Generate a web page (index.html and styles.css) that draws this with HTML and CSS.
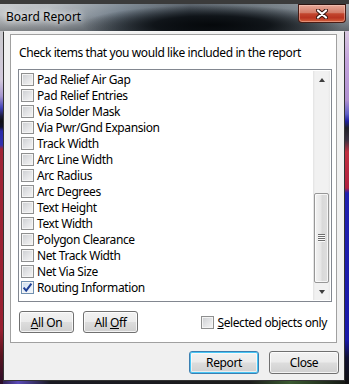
FILE: index.html
```html
<!DOCTYPE html>
<html lang="en">
<head>
  <meta charset="UTF-8">
  <title>Board Report</title>
  <link rel="stylesheet" href="styles.css">
</head>
<body>

  <div class="window">
    <div class="titlebar">
      <span class="title">Board Report</span>
      <button class="close-btn" title="Close">
        <svg width="12" height="10" viewBox="0 0 12 10">
          <path d="M2 1.5 L10 8.5 M10 1.5 L2 8.5" stroke="#3b1812" stroke-width="4.2" stroke-linecap="round"/>
          <path d="M2 1.5 L10 8.5 M10 1.5 L2 8.5" stroke="#ffffff" stroke-width="2.2" stroke-linecap="round"/>
        </svg>
      </button>
    </div>

    <div class="client">
      <div class="panel">
        <div class="heading">Check items that you would like included in the report</div>

        <div class="listbox">
          <ul class="items">
            <li><span class="cb"></span>Pad Relief Air Gap</li>
            <li><span class="cb"></span>Pad Relief Entries</li>
            <li><span class="cb"></span>Via Solder Mask</li>
            <li><span class="cb"></span>Via Pwr/Gnd Expansion</li>
            <li><span class="cb"></span>Track Width</li>
            <li><span class="cb"></span>Arc Line Width</li>
            <li><span class="cb"></span>Arc Radius</li>
            <li><span class="cb"></span>Arc Degrees</li>
            <li><span class="cb"></span>Text Height</li>
            <li><span class="cb"></span>Text Width</li>
            <li><span class="cb"></span>Polygon Clearance</li>
            <li><span class="cb"></span>Net Track Width</li>
            <li><span class="cb"></span>Net Via Size</li>
            <li>
              <span class="cb checked">
                <svg width="11" height="11" viewBox="0 0 11 11">
                  <path d="M1.6 5.6 L4.2 8.6 L9.4 1.6" fill="none" stroke="#1f3f96" stroke-width="2"/>
                </svg>
              </span>Routing Information
            </li>
          </ul>

          <!-- scrollbar -->
          <div class="scrollbar">
            <div class="sb-btn"><span class="arrow up"></span></div>
            <div class="sb-track">
              <div class="sb-thumb"><span class="grip"></span></div>
            </div>
            <div class="sb-btn"><span class="arrow down"></span></div>
          </div>
        </div>

        <div class="panel-foot">
          <button class="btn small"><u>A</u>ll On</button>
          <button class="btn small">All <u>O</u>ff</button>
          <label class="selected-only"><span class="cb"></span><span><u>S</u>elected objects only</span></label>
        </div>
      </div>

      <div class="actions">
        <button class="btn wide focus">Report</button>
        <button class="btn wide">Close</button>
      </div>
    </div>
  </div>

</body>
</html>
```

FILE: styles.css
```css
body {
  margin: 0;
  font-family: "Noto Sans", "Liberation Sans", sans-serif;
  font-size: 12px;
  letter-spacing: -0.4px;
  color: #000;
  background-color: #202020;
}

/* window frame, desktop colours showing through the glass */
.window {
  width: 349px;
  height: 384px;
  box-sizing: border-box;
  display: flex;
  flex-direction: column;
  padding: 0 4px 3px 3px;
  background:
    linear-gradient(to bottom, #8a8a8a 0, #c9c9cd 31px, #d2c9dc 80px, #a898d0 96px, #4040b8 108px, #1c1c40 116px, #0e0e14 121px, #10102a 127px, #2a2aa8 131px, #3030b0 145px, #a02436 149px, #981f30 330px, #5a1420 355px, #2a0e2a 384px) left top / 3px 100% no-repeat,
    linear-gradient(to bottom, #8a8a8a 0, #d8c8e0 31px, #c4a4dc 60px, #b090d0 100px, #6060c8 114px, #2020a0 121px, #202028 128px, #3a3040 140px, #c03040 152px, #b02040 188px, #2020b0 193px, #1818a8 340px, #101030 358px, #101010 384px) right top / 4px 100% no-repeat,
    linear-gradient(90deg, #2a1a40 0, #5a4ab8 18px, #1a1a22 50px, #1c1c1c 250px, #3a5a30 290px, #141414 349px) left bottom / 100% 3px no-repeat,
    #202020;
}

.titlebar {
  height: 31px;
  flex: none;
  box-sizing: border-box;
  margin: 0 -4px 0 -3px;
  padding: 4px 3px 0 6px;
  display: flex;
  align-items: flex-start;
  background:
    linear-gradient(#3b3b3b, #3b3b3b) left top / 100% 4px no-repeat,
    radial-gradient(ellipse 130px 20px at 212px 25px, #05080b 0%, rgba(8, 12, 16, 0.88) 45%, rgba(8, 12, 16, 0) 100%),
    linear-gradient(to bottom, rgba(255, 255, 255, 0.18) 4px, rgba(255, 255, 255, 0.04) 15px, rgba(0, 0, 0, 0.3) 31px),
    linear-gradient(90deg, #bcc0c4 0, #a8aeb4 55px, #6c7985 120px, #3a444e 190px, #58636c 260px, #8a939b 349px);
}

.title {
  flex: 1;
  line-height: 26px;
  letter-spacing: 0;
  color: #000;
  text-shadow: 0 0 6px #fff, 0 0 10px rgba(255, 255, 255, 0.8);
}

.close-btn {
  width: 48px;
  height: 19px;
  padding: 0;
  display: flex;
  align-items: center;
  justify-content: center;
  border: 1px solid #4a1c14;
  border-top-color: #2c1410;
  border-radius: 0 0 4px 4px;
  background: linear-gradient(#e6a898 0%, #d47e6a 44%, #c2462e 52%, #b83420 75%, #d5633e 100%);
  box-shadow: inset 0 0 0 1px rgba(255, 220, 210, 0.4);
}

/* client area */
.client {
  flex: 1;
  display: flex;
  flex-direction: column;
  border: 1px solid #343434;
  border-top-color: #f4f4f4;
  background-color: #f0f0f0;
}

.panel {
  margin: 2px 7px 0 6px;
  padding: 10px 4px 9px 7px;
  border: 1px solid #a0a0a0;
  background-color: #fff;
}

.heading {
  line-height: 16px;
  height: 16px;
  margin-bottom: 8px;
  padding-left: 1px;
  white-space: nowrap;
}

.listbox {
  height: 233px;
  box-sizing: border-box;
  border: 1px solid #828790;
  padding: 1px;
  display: flex;
  background-color: #fff;
}

.items {
  flex: 1;
  margin: 0;
  padding: 0 0 0 1px;
  list-style: none;
  overflow: hidden;
}

.items li {
  height: 16px;
  display: flex;
  align-items: center;
  white-space: nowrap;
}

/* win7 checkboxes */
.cb {
  width: 13px;
  height: 13px;
  box-sizing: border-box;
  flex: none;
  margin-right: 3px;
  display: flex;
  align-items: center;
  justify-content: center;
  border: 1px solid #8e8f8f;
  background: linear-gradient(135deg, #cbcdd0 0%, #e2e3e5 50%, #f6f6f6 100%);
  box-shadow: inset 0 0 0 1px #f4f4f4;
}

.cb.checked {
  border-color: #6f8fb0;
  background: linear-gradient(135deg, #c9dbee 0%, #e2edf8 50%, #f4f8fd 100%);
}

/* scrollbar */
.scrollbar {
  width: 17px;
  flex: none;
  display: flex;
  flex-direction: column;
  background: linear-gradient(90deg, #e2e2e2 0, #f1f1f1 2px, #f1f1f1 15px, #e8e8e8 17px);
}

.sb-btn {
  height: 17px;
  display: flex;
  align-items: center;
  justify-content: center;
}

.arrow {
  width: 0;
  height: 0;
  border-left: 3.5px solid transparent;
  border-right: 3.5px solid transparent;
}

.arrow.up {
  border-bottom: 4px solid #3e3e3e;
}

.arrow.down {
  border-top: 4px solid #3e3e3e;
}

.sb-track {
  flex: 1;
  display: flex;
  flex-direction: column;
  justify-content: flex-end;
}

.sb-thumb {
  height: 90px;
  margin: 0 1px;
  box-sizing: border-box;
  border: 1px solid #979797;
  border-radius: 2px;
  display: flex;
  align-items: center;
  justify-content: center;
  background: linear-gradient(90deg, #f3f3f3 0%, #e6e6e6 45%, #d9d9d9 55%, #dedede 100%);
  box-shadow: inset 0 0 0 1px rgba(255, 255, 255, 0.7);
}

.grip {
  width: 7px;
  height: 8px;
  background: repeating-linear-gradient(to bottom, #6d6d6d 0 1px, #fafafa 1px 2px);
}

/* buttons */
.panel-foot {
  margin-top: 9px;
  padding-left: 1px;
  display: flex;
  align-items: center;
  gap: 9px;
}

.btn {
  font-family: "Noto Sans", "Liberation Sans", sans-serif;
  font-size: 12px;
  letter-spacing: -0.4px;
  color: #000;
  padding: 0;
  border: 1px solid #707070;
  border-radius: 3px;
  background: linear-gradient(#f2f2f2 0%, #ebebeb 48%, #dddddd 52%, #cfcfcf 100%);
  box-shadow: inset 0 0 0 1px rgba(255, 255, 255, 0.75);
}

.btn.small {
  width: 55px;
  height: 22px;
}

.btn.wide {
  width: 70px;
  height: 23px;
}

.btn.focus {
  border-color: #3c7fb1;
  box-shadow: inset 0 0 0 1px #48c6f5, inset 0 0 0 2px rgba(255, 255, 255, 0.6);
}

.selected-only {
  margin-left: auto;
  margin-right: 5px;
  display: flex;
  align-items: center;
  white-space: nowrap;
}

.actions {
  margin-top: 8px;
  padding-right: 5px;
  display: flex;
  justify-content: flex-end;
  gap: 10px;
}
```
